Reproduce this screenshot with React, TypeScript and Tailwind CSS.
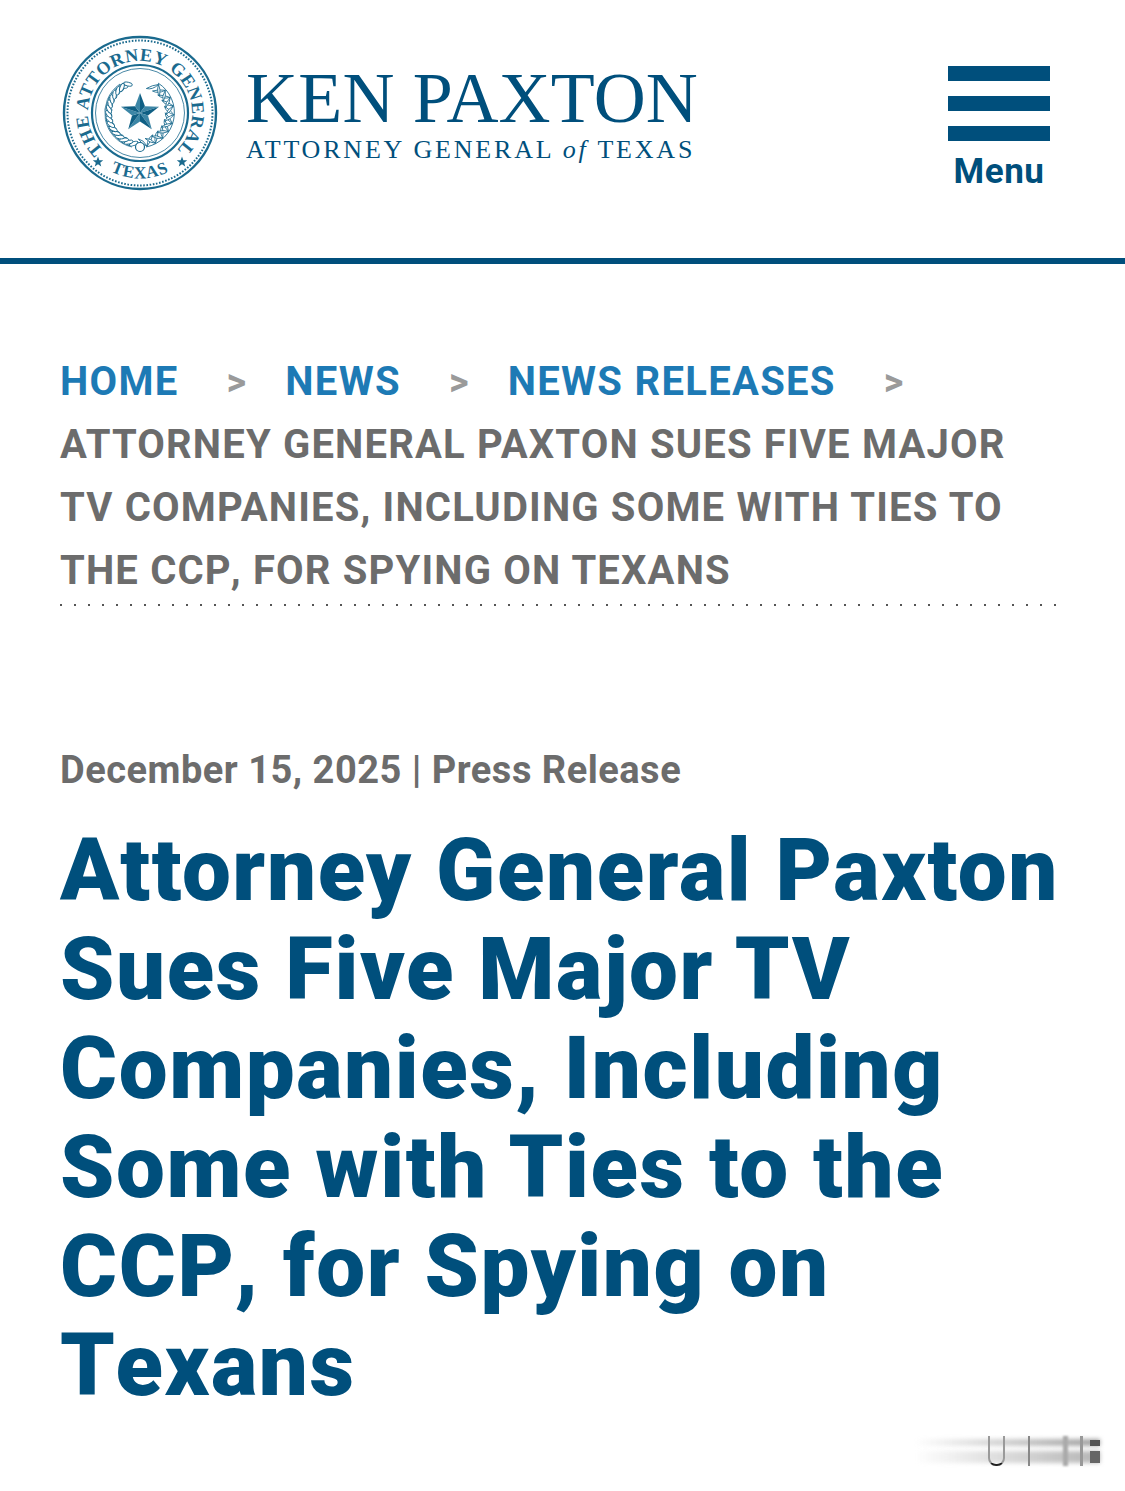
import React from "react";

const starPoints = (cx: number, cy: number, r: number, rotate = -90) => {
  const pts: string[] = [];
  for (let i = 0; i < 10; i++) {
    const rad = i % 2 === 0 ? r : r * 0.42;
    const a = ((rotate + i * 36) * Math.PI) / 180;
    pts.push(`${(cx + rad * Math.cos(a)).toFixed(2)},${(cy + rad * Math.sin(a)).toFixed(2)}`);
  }
  return pts.join(" ");
};

const SEAL = "#1a6a8e";

// left branch is laurel, right branch is long palm-like fronds
const LeftBranch = () => {
  const leaves = Array.from({ length: 15 }, (_, i) => 18 + i * 9.5);
  return (
    <g>
      <path d="M 70 112 A 35 35 0 0 1 58 49" fill="none" stroke={SEAL} strokeWidth={0.8} />
      {leaves.map((deg, i) => {
        const a = (deg * Math.PI) / 180;
        const x = 78 - 34 * Math.sin(a);
        const y = 78 + 34 * Math.cos(a);
        return (
          <g key={i} transform={`translate(${x.toFixed(2)} ${y.toFixed(2)}) rotate(${deg})`}>
            <ellipse cx={0} cy={-4.5} rx={1.9} ry={4.5} transform="rotate(-50)" fill="#ffffff" stroke={SEAL} strokeWidth={0.9} />
            <ellipse cx={0} cy={-4.5} rx={1.9} ry={4.5} transform="rotate(50)" fill="#ffffff" stroke={SEAL} strokeWidth={0.9} />
          </g>
        );
      })}
    </g>
  );
};

const RightBranch = () => {
  const fronds = Array.from({ length: 10 }, (_, i) => 12 + i * 15);
  return (
    <g>
      <path d="M 84 112 A 35 35 0 0 0 96 48" fill="none" stroke={SEAL} strokeWidth={0.9} />
      {fronds.map((deg, i) => {
        const a = (deg * Math.PI) / 180;
        const x = 78 + 34 * Math.sin(a);
        const y = 78 + 34 * Math.cos(a);
        return (
          <g key={i} transform={`translate(${x.toFixed(2)} ${y.toFixed(2)}) rotate(${-deg})`}>
            <path d="M 0 0 Q 5 -4 8 -10 Q 2 -8 0 0 Z" fill="#ffffff" stroke={SEAL} strokeWidth={0.8} />
            <path d="M 0 0 Q -5 -3 -7 -9 Q -2 -7 0 0 Z" fill="#ffffff" stroke={SEAL} strokeWidth={0.8} />
          </g>
        );
      })}
    </g>
  );
};

const StarFacets = ({ cx, cy, r }: { cx: number; cy: number; r: number }) => {
  const pts = starPoints(cx, cy, r).split(" ");
  return (
    <g>
      {pts.map((p, i) => (
        <polygon
          key={i}
          points={`${cx},${cy} ${p} ${pts[(i + 1) % 10]}`}
          fill={i % 2 === 0 ? "#0f5f84" : "#3c86a6"}
        />
      ))}
    </g>
  );
};

const Seal = () => (
  <svg width={156} height={156} viewBox="0 0 156 156" className="shrink-0">
    <defs>
      <path id="sealTop" d="M 78 130 A 52 52 0 1 1 78.01 130" />
      <path id="sealBottom" d="M 23 113 A 65 65 0 0 0 133 113" />
    </defs>
    <circle cx={78} cy={78} r={76} fill="none" stroke={SEAL} strokeWidth={2.4} />
    <circle cx={78} cy={78} r={72.5} fill="none" stroke={SEAL} strokeWidth={2} strokeDasharray="1.6 1.6" />
    <circle cx={78} cy={78} r={48} fill="none" stroke={SEAL} strokeWidth={2.2} />
    <circle cx={78} cy={78} r={44.5} fill="none" stroke={SEAL} strokeWidth={0.8} />
    <text fontFamily="'Liberation Serif', serif" fontWeight={700} fontSize={18} fill={SEAL} letterSpacing={0.55}>
      <textPath href="#sealTop" startOffset="50%" textAnchor="middle">THE ATTORNEY GENERAL</textPath>
    </text>
    <text fontFamily="'Liberation Serif', serif" fontWeight={700} fontSize={17} fill={SEAL} letterSpacing={0.8}>
      <textPath href="#sealBottom" startOffset="50%" textAnchor="middle">TEXAS</textPath>
    </text>
    <polygon points={starPoints(36, 127, 5.5)} fill={SEAL} />
    <polygon points={starPoints(120, 127, 5.5)} fill={SEAL} />
    <LeftBranch />
    <RightBranch />
    <circle cx={78} cy={112} r={4.5} fill="#ffffff" stroke={SEAL} strokeWidth={1.2} />
    <StarFacets cx={78} cy={78} r={20} />
  </svg>
);

const Crumb = ({ children }: { children: React.ReactNode }) => (
  <span className="tracking-[1.3px] text-[#1d7ab5]">{children}</span>
);

const Sep = () => <span className="mr-[38px] ml-[48px] text-[38px] leading-none font-bold text-[#9a9a9a]">&gt;</span>;

export default function App() {
  return (
    <div className="relative h-[1491px] w-[1125px] overflow-hidden bg-white font-['Roboto',sans-serif]">
      <header className="flex h-[264px] items-start justify-between border-b-[6px] border-[#004f7c] pt-[35px] pl-[62px] pr-[75px]">
        <div className="flex items-start">
          <Seal />
          <div className="ml-[28px] pt-[27px] font-['Liberation_Serif',serif] text-[#004f7c]">
            <div className="text-[72px] leading-[72px] tracking-[0.2px] whitespace-nowrap">KEN PAXTON</div>
            <div className="mt-[1px] text-[26px] leading-[30px] tracking-[2.8px] whitespace-nowrap">
              ATTORNEY GENERAL <span className="italic">of</span> TEXAS
            </div>
          </div>
        </div>
        <button className="mt-[31px] flex w-[102px] flex-col items-center">
          <span className="h-[15px] w-full bg-[#004f7c]" />
          <span className="mt-[15px] h-[15px] w-full bg-[#004f7c]" />
          <span className="mt-[15px] h-[15px] w-full bg-[#004f7c]" />
          <span className="mt-[10px] text-[35px] leading-[42px] font-bold tracking-[0.6px] text-[#004f7c]">Menu</span>
        </button>
      </header>

      <nav className="mt-[86px] ml-[60px] w-[1000px] text-[40px] leading-[63px] font-bold tracking-[1.17px] text-[#6c6c6c]">
        <div>
          <Crumb>HOME</Crumb>
          <Sep />
          <Crumb>NEWS</Crumb>
          <Sep />
          <Crumb>NEWS RELEASES</Crumb>
          <Sep />
        </div>
        <div className="whitespace-nowrap">ATTORNEY GENERAL PAXTON SUES FIVE MAJOR</div>
        <div className="whitespace-nowrap">TV COMPANIES, INCLUDING SOME WITH TIES TO</div>
        <div className="whitespace-nowrap">THE CCP<span className="ml-[-1px]">,</span> FOR SPYING ON TEXANS</div>
      </nav>
      <div className="mt-[2px] ml-[60px] h-[2px] w-[1000px] bg-[linear-gradient(to_right,#555555_2px,transparent_2px)] bg-[length:14px_2px]" />

      <p className="mt-[142px] ml-[60px] text-[38px] leading-[45px] font-bold tracking-[0.5px] text-[#6c6c6c]">
        December 15, 2025 | Press Release
      </p>
      <h1 className="mt-[28px] ml-[60px] text-[87px] leading-[99px] font-black tracking-[1.6px] text-[#004f7c]">
        <span className="block whitespace-nowrap">Attorney General Paxton</span>
        <span className="block whitespace-nowrap">Sues Five Major TV</span>
        <span className="block whitespace-nowrap">Companies, Including</span>
        <span className="block whitespace-nowrap">Some with Ties to the</span>
        <span className="block whitespace-nowrap">CCP<span className="ml-[-1px]">,</span> for Spying on</span>
        <span className="block whitespace-nowrap"><span className="mr-[-1px]">T</span>exans</span>
      </h1>

      {/* blurred watermark smear, bottom right */}
      <div className="absolute top-[1436px] left-[915px] h-[32px] w-[185px]">
        <div className="absolute top-[3px] left-0 h-[7px] w-full bg-gradient-to-r from-transparent to-[#a0a0a0] blur-[2px]" />
        <div className="absolute top-[15px] left-0 h-[12px] w-full bg-gradient-to-r from-transparent to-[#b5b5b5] blur-[2px]" />
        <div className="absolute top-0 left-[73px] h-[30px] w-[17px] rounded-b-[8px] border-x-[2px] border-b-[2px] border-x-[#9a9a9a] border-b-[#222222]" />
        <div className="absolute top-0 left-[113px] h-[30px] w-[2px] bg-[#888888] blur-[0.5px]" />
        <div className="absolute top-0 left-[148px] h-[30px] w-[5px] bg-[#aaaaaa] blur-[1px]" />
        <div className="absolute top-0 left-[165px] h-[30px] w-[3px] bg-[#999999] blur-[0.5px]" />
        <div className="absolute top-[4px] left-[175px] h-[6px] w-[10px] bg-[#555555] blur-[0.5px]" />
        <div className="absolute top-[15px] left-[175px] h-[12px] w-[10px] bg-[#666666] blur-[0.5px]" />
      </div>
    </div>
  );
}
